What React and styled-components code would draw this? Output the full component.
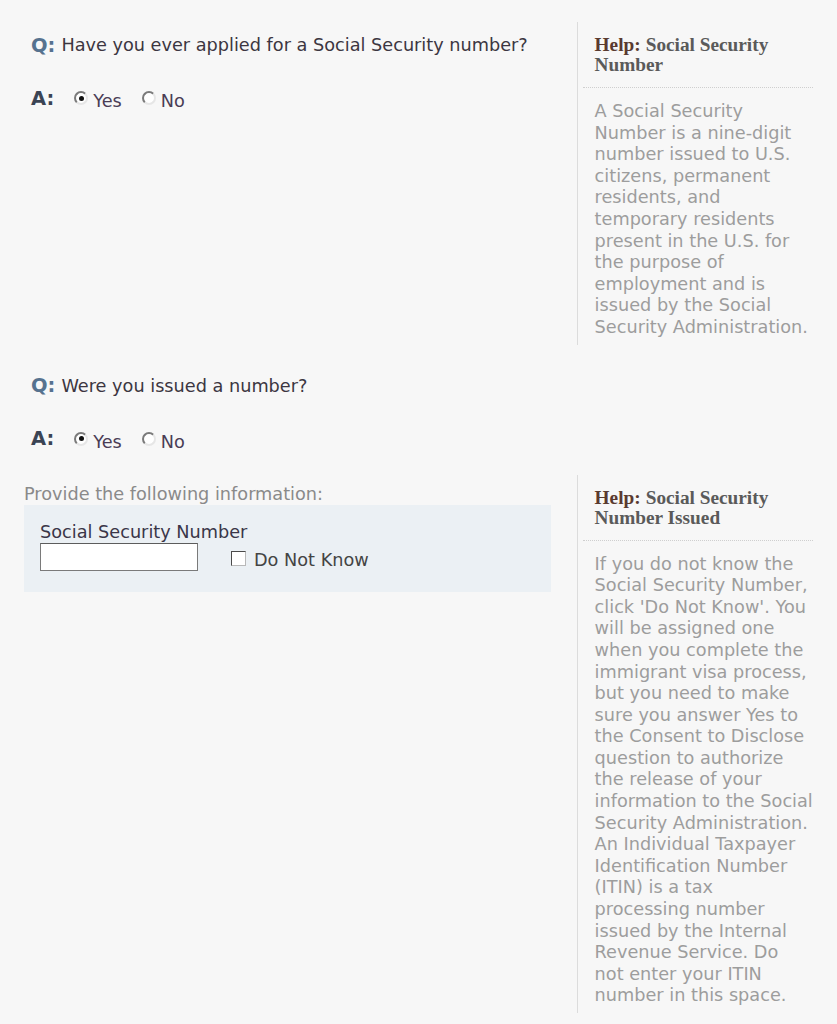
import styled, { createGlobalStyle } from "styled-components";

const Global = createGlobalStyle`
  html, body {
    margin: 0;
    background: #f7f7f7;
  }
  body {
    font-family: "DejaVu Sans", Verdana, sans-serif;
    font-size: 17.7px;
  }
`

const Page = styled.div`
  display: flex;
  flex-direction: column;
  padding: 22px 0 0 24px;
  width: 813px;
  box-sizing: border-box;
`
const Row = styled.div`
  display: flex;
  gap: 26px;
  margin-top: ${(p) => p.$top || 0}px;
`
const Main = styled.div`
  width: 528px;
  padding-top: ${(p) => p.$pad || 0}px;
`
const QA = styled.div`
  padding-left: 7px;
`
const Line = styled.div`
  display: flex;
  align-items: center;
  height: 22px;
  margin-top: ${(p) => p.$top || 0}px;
`
const Letter = styled.span`
  font-weight: bold;
  font-size: 19.5px;
  color: ${(p) => (p.$q ? "#56728f" : "#3b4454")};
  margin-right: ${(p) => (p.$q ? 6 : 20)}px;
`
const QText = styled.span`
  color: #3c3641;
  line-height: 22px;
`
const Choice = styled.label`
  display: flex;
  align-items: center;
  margin-right: 20px;
  color: #4a3d55;
  span {
    position: relative;
    top: 3px;
  }
`
const Radio = styled.input.attrs({ type: "radio" })`
  appearance: none;
  width: 14px;
  height: 14px;
  margin: 0 5px 0 0;
  border-radius: 50%;
  border: 2px solid;
  border-color: #7a7a7a #e6e6e6 #e6e6e6 #7a7a7a;
  background: #fff;
  box-sizing: border-box;
  display: grid;
  place-items: center;
  &:checked::after {
    content: "";
    width: 5px;
    height: 5px;
    border-radius: 50%;
    background: #111;
  }
`
const Hint = styled.div`
  color: #8a8a8a;
  line-height: 22px;
  margin-top: 8px;
`
const Panel = styled.div`
  background: #ebf0f4;
  padding: 16px 16px 21px;
`
const FieldLabel = styled.div`
  color: #3a3648;
  line-height: 22px;
`
const Fields = styled.div`
  display: flex;
  align-items: center;
  gap: 33px;
`
const TextBox = styled.input`
  width: 158px;
  height: 28px;
  box-sizing: border-box;
  border: 1px solid #7a7a7a;
  border-top-color: #5c5c5c;
  background: #fff;
  margin: 0;
`
const Check = styled.label`
  display: flex;
  align-items: center;
  gap: 8px;
  color: #444;
  margin-top: 3px;
  span {
    position: relative;
    top: 2px;
  }
`
const Box = styled.input.attrs({ type: "checkbox" })`
  appearance: none;
  width: 15px;
  height: 15px;
  margin: 0;
  box-sizing: border-box;
  border: 1px solid;
  border-color: #4a4a4a #b8b8b8 #b8b8b8 #4a4a4a;
  background: #fff;
`
const Help = styled.aside`
  width: 237px;
  box-sizing: border-box;
  border-left: 1px solid #dcdcdc;
  padding: 13px 0 6px 17px;
`
const HelpTitle = styled.h3`
  margin: 0 0 0 -12px;
  padding: 0 0 12px 12px;
  font-family: "Liberation Serif", "Times New Roman", serif;
  font-weight: bold;
  font-size: 19.3px;
  line-height: 20px;
  color: #5a5a5a;
  border-bottom: 1px dotted #cfcfcf;
`
const HelpLabel = styled.span`
  color: #5a3a30;
  margin-right: 5px;
`
const HelpText = styled.p`
  margin: 13px 0 0;
  color: #9d9d9d;
  line-height: 21.6px;
  white-space: nowrap;
`

function Question({ text, top }) {
  return (
    <QA>
      <Line $top={top}>
        <Letter $q>Q:</Letter>
        <QText>{text}</QText>
      </Line>
      <Line $top={31}>
        <Letter>A:</Letter>
        <Choice>
          <Radio name={text} defaultChecked />
          <span>Yes</span>
        </Choice>
        <Choice>
          <Radio name={text} />
          <span>No</span>
        </Choice>
      </Line>
    </QA>
  )
}

function HelpBox({ title, rest, lines }) {
  return (
    <Help>
      <HelpTitle>
        <HelpLabel>Help:</HelpLabel>
        <span>{title}</span>
        <br />
        <span>{rest}</span>
      </HelpTitle>
      <HelpText>
        {lines.map((l, i) => (
          <span key={i}>
            {l}
            {i < lines.length - 1 && <br />}
          </span>
        ))}
      </HelpText>
    </Help>
  )
}

const ssnHelp = [
  "A Social Security",
  "Number is a nine-digit",
  "number issued to U.S.",
  "citizens, permanent",
  "residents, and",
  "temporary residents",
  "present in the U.S. for",
  "the purpose of",
  "employment and is",
  "issued by the Social",
  "Security Administration.",
]

const issuedHelp = [
  "If you do not know the",
  "Social Security Number,",
  "click 'Do Not Know'. You",
  "will be assigned one",
  "when you complete the",
  "immigrant visa process,",
  "but you need to make",
  "sure you answer Yes to",
  "the Consent to Disclose",
  "question to authorize",
  "the release of your",
  "information to the Social",
  "Security Administration.",
  "An Individual Taxpayer",
  "Identification Number",
  "(ITIN) is a tax",
  "processing number",
  "issued by the Internal",
  "Revenue Service. Do",
  "not enter your ITIN",
  "number in this space.",
]

export default function App() {
  return (
    <Page>
      <Global />
      <Row>
        <Main $pad={12}>
          <Question text="Have you ever applied for a Social Security number?" />
        </Main>
        <HelpBox title="Social Security" rest="Number" lines={ssnHelp} />
      </Row>
      <Row $top={30}>
        <Main>
          <Question text="Were you issued a number?" />
        </Main>
      </Row>
      <Row $top={25}>
        <Main>
          <Hint>Provide the following information:</Hint>
          <Panel>
            <FieldLabel>Social Security Number</FieldLabel>
            <Fields>
              <TextBox />
              <Check>
                <Box />
                <span>Do Not Know</span>
              </Check>
            </Fields>
          </Panel>
        </Main>
        <HelpBox title="Social Security" rest="Number Issued" lines={issuedHelp} />
      </Row>
    </Page>
  )
}
